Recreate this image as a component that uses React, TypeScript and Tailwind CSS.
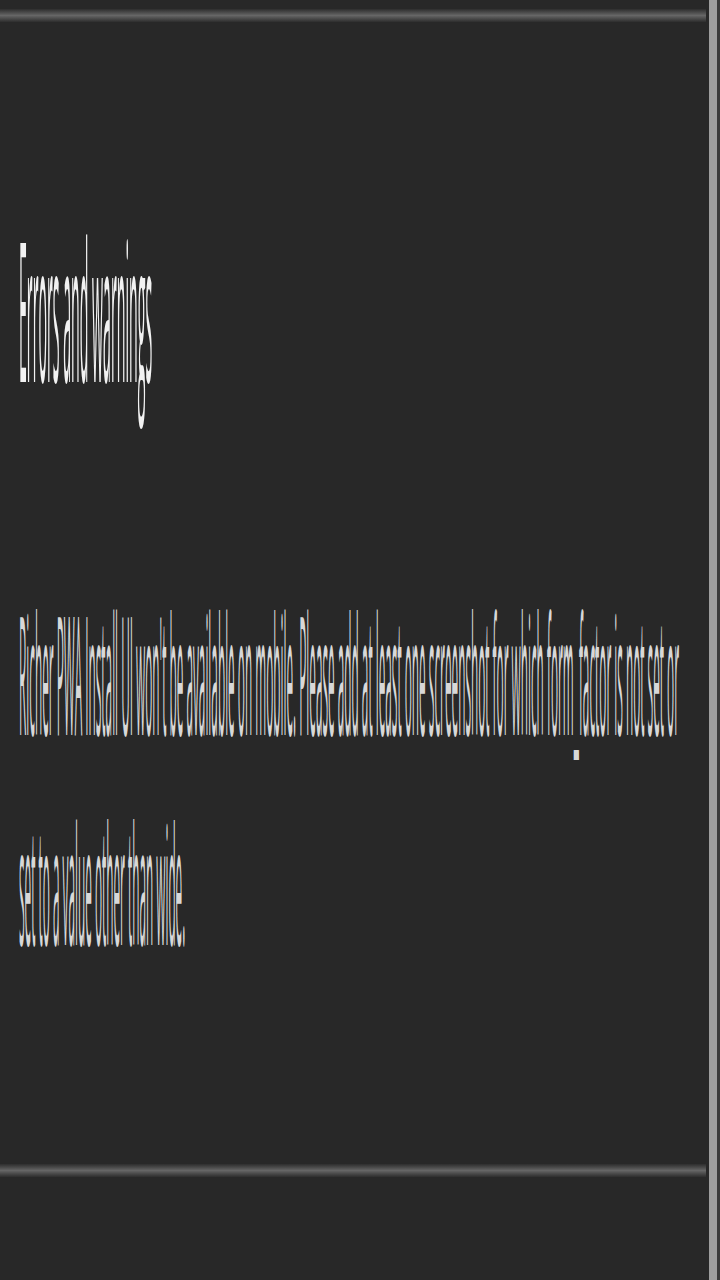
import React from "react";

export default function App() {
  return (
    <div className="w-[720px] h-[1280px] bg-[#282828] flex overflow-hidden" style={{ fontFamily: '"Open Sans", "Noto Sans", sans-serif' }}>
      <div className="w-[709px] h-full flex flex-col">
        <div className="mt-[9px] h-[13px] w-[706px] bg-gradient-to-b from-[#2e2e2e] via-[#666666] to-[#2e2e2e]" />
        <div className="origin-top-left scale-y-[15] pl-[19px] w-[700px]">
          <div className="mt-[12.5px] text-[13px] leading-[13px] text-[#f2f2f2] origin-left scale-x-[1.09] w-[560px]">Errors and warnings</div>
        </div>
        <div className="mt-[522.5px] origin-top-left scale-y-[15] pl-[19px] w-[700px]">
          <div className="text-[11px] leading-[14px] text-[#d8d8d8] w-[628px] origin-left scale-x-[1.073] antialiased">
            Richer PWA Install UI won't be available on mobile. Please add at least one screenshot for which form_factor is not set or set to a value other than wide.
          </div>
        </div>
        <div className="mt-auto mb-[103px] h-[13px] w-[706px] bg-gradient-to-b from-[#2e2e2e] via-[#666666] to-[#2e2e2e]" />
      </div>
      <div className="w-[8px] h-full bg-[#9e9e9e]" />
      <div className="w-[3px] h-full bg-[#3a3a3a]" />
    </div>
  );
}
